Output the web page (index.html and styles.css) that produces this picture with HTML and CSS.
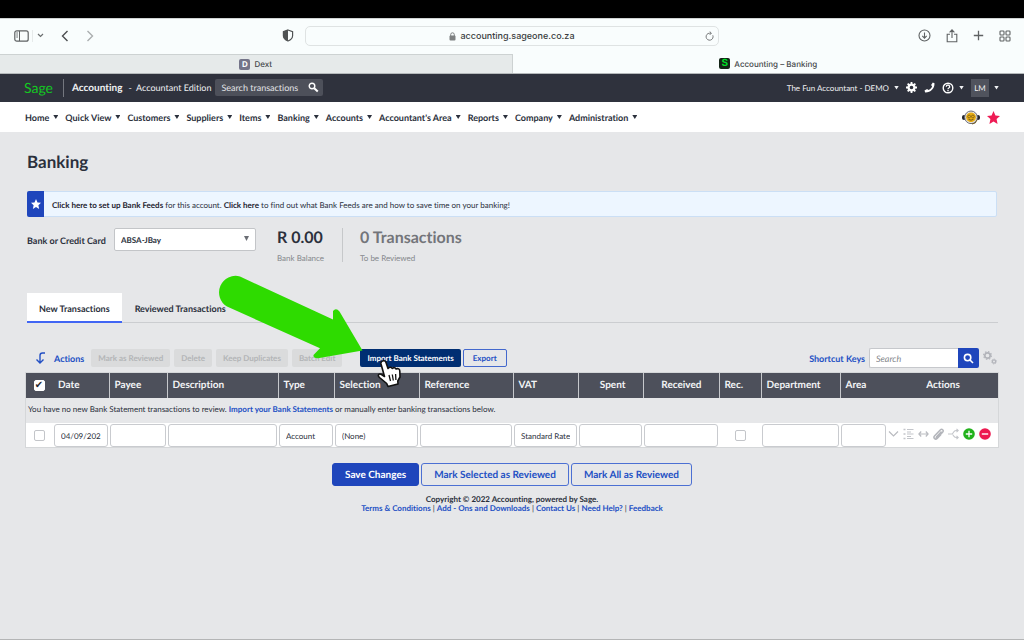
FILE: index.html
```html
<!DOCTYPE html>
<html lang="en">
<head>
<meta charset="utf-8">
<title>Accounting - Banking</title>
<link rel="stylesheet" href="styles.css">
</head>
<body>
<div class="screen-edge"></div>
<header class="browser">
  <div class="toolbar">
    <div class="tool-left">
      <button class="icon-btn" aria-label="Sidebar"><svg width="15" height="12" viewBox="0 0 15 12" fill="none" stroke="#5f6263"><rect x=".8" y=".8" width="13.4" height="10.4" rx="2" stroke-width="1.2"/><path d="M5.5 1v10M2.3 3h1.6M2.3 5h1.6M2.3 7h1.6"/></svg></button>
      <span class="tool-split"></span>
      <button class="icon-btn" aria-label="Tab groups"><svg width="7" height="5" viewBox="0 0 7 5" fill="none" stroke="#6b6e6f" stroke-width="1.2"><path d="M1 1l2.5 2.5L6 1"/></svg></button>
      <button class="icon-btn back" aria-label="Back"><svg width="8" height="12" viewBox="0 0 8 12" fill="none" stroke="#4c4e50" stroke-width="1.4"><path d="M6.5 1L1.5 6l5 5"/></svg></button>
      <button class="icon-btn forward" aria-label="Forward"><svg width="8" height="12" viewBox="0 0 8 12" fill="none" stroke="#aaaeaf" stroke-width="1.4"><path d="M1.5 1l5 5-5 5"/></svg></button>
    </div>
    <button class="icon-btn shield" aria-label="Privacy report"><svg width="12" height="13" viewBox="0 0 12 13"><path d="M6 1l4.600 1.600v4.200C10.600 9.200 8.600 11 6 12 3.400 11 1.400 9.200 1.400 6.800V2.600z" fill="none" stroke="#4f5253" stroke-width="1.200"/><path d="M6 1L1.400 2.600v4.200C1.400 9.200 3.400 11 6 12z" fill="#4f5253"/></svg></button>
    <div class="address">
      <span class="url"><svg width="7" height="9" viewBox="0 0 7 9"><rect x=".5" y="3.600" width="6" height="5" rx="1" fill="#7d8081"/><path d="M1.700 4V2.600a1.800 1.800 0 0 1 3.600 0V4" fill="none" stroke="#7d8081"/></svg>accounting.sageone.co.za</span>
      <button class="icon-btn" aria-label="Reload"><svg width="9" height="10" viewBox="0 0 9 10" fill="none" stroke="#77797a"><path d="M7.800 4.300A3.500 3.500 0 1 1 4.500 2.200h1.600M4.700.5l1.700 1.700-1.700 1.700"/></svg></button>
    </div>
    <div class="tool-right">
      <button class="icon-btn" aria-label="Downloads"><svg width="13" height="13" viewBox="0 0 13 13" fill="none" stroke="#5f6263" stroke-width="1.100"><circle cx="6.500" cy="6.500" r="5.500"/><path d="M6.500 3.500v5.500M4.300 6.900l2.200 2.200 2.200-2.200"/></svg></button>
      <button class="icon-btn" aria-label="Share"><svg width="12" height="14" viewBox="0 0 12 14" fill="none" stroke="#5f6263" stroke-width="1.100"><path d="M4 5.200H1.200v7.600h9.600V5.200H8M6 9V1M3.600 3.300L6 .9l2.400 2.400"/></svg></button>
      <button class="icon-btn" aria-label="New tab"><svg width="11" height="11" viewBox="0 0 11 11" fill="none" stroke="#5f6263" stroke-width="1.300"><path d="M5.500.8v9.400M.8 5.500h9.400"/></svg></button>
      <button class="icon-btn" aria-label="Tab overview"><svg width="12" height="12" viewBox="0 0 12 12" fill="none" stroke="#5f6263" stroke-width="1.100"><rect x="1" y="1" width="4" height="4" rx=".8"/><rect x="7" y="1" width="4" height="4" rx=".8"/><rect x="1" y="7" width="4" height="4" rx=".8"/><rect x="7" y="7" width="4" height="4" rx=".8"/></svg></button>
    </div>
  </div>
  <div class="browser-tabs">
    <button class="browser-tab idle"><span class="favicon dext">D</span>Dext</button>
    <button class="browser-tab"><span class="favicon sage">S</span>Accounting – Banking</button>
  </div>
</header>

<div class="app-bar">
  <a class="logo" href="#">Sage</a>
  <span class="app-split"></span>
  <strong class="product">Accounting</strong>
  <span class="edition">- &nbsp;Accountant Edition</span>
  <form class="top-search">
    <input type="text" placeholder="Search transactions" aria-label="Search transactions">
    <button type="button" aria-label="Search"><svg width="11" height="11" viewBox="0 0 11 11" fill="none" stroke="#fff"><circle cx="4" cy="4" r="2.800" stroke-width="1.400"/><path d="M6.200 6.200l3.600 3.300" stroke-width="2"/></svg></button>
  </form>
  <div class="account">
    <button class="menu-btn company">The Fun Accountant - DEMO<span class="caret"></span></button>
    <button class="menu-btn" aria-label="Settings"><svg width="11" height="11" viewBox="0 0 12 12"><circle cx="6" cy="6" r="3.200" fill="none" stroke="#fff" stroke-width="2.400"/><path d="M6 0v2.500M6 9.500V12M0 6h2.500M9.500 6H12M1.800 1.800l1.700 1.700M8.500 8.500l1.700 1.700M10.200 1.800L8.500 3.500M3.500 8.500l-1.700 1.700" stroke="#fff" stroke-width="2"/></svg></button>
    <button class="menu-btn" aria-label="Phone"><svg width="11" height="11" viewBox="0 0 11 11"><path d="M8.800.5l1.700.7C10.700 6.500 6.500 10.700 1.200 10.500L.5 8.400l2.600-1.300 1.300 1C6 7.300 7.300 6 8.100 4.400l-1-1.300z" fill="#fff"/></svg></button>
    <button class="menu-btn" aria-label="Help"><svg width="12" height="12" viewBox="0 0 12 12" fill="none" stroke="#fff" stroke-width="1.400"><circle cx="6" cy="6" r="4.800"/><path d="M4.300 4.800a1.700 1.500 0 1 1 2.500 1.200C6.200 6.300 6 6.500 6 7.200M6 8v1.300" stroke-width="1.300"/></svg><span class="caret"></span></button>
    <button class="menu-btn"><span class="avatar">LM</span><span class="caret"></span></button>
  </div>
</div>

<nav class="main-nav">
  <a href="#">Home<span class="caret"></span></a>
  <a href="#">Quick View<span class="caret"></span></a>
  <a href="#">Customers<span class="caret"></span></a>
  <a href="#">Suppliers<span class="caret"></span></a>
  <a href="#">Items<span class="caret"></span></a>
  <a href="#">Banking<span class="caret"></span></a>
  <a href="#">Accounts<span class="caret"></span></a>
  <a href="#">Accountant's Area<span class="caret"></span></a>
  <a href="#">Reports<span class="caret"></span></a>
  <a href="#">Company<span class="caret"></span></a>
  <a href="#">Administration<span class="caret"></span></a>
  <div class="nav-icons">
    <button class="icon-btn" aria-label="Support"><svg width="18" height="15" viewBox="0 0 18 15"><rect x="0" y="5" width="4" height="5" rx="2" fill="#24262e"/><rect x="14" y="5" width="4" height="5" rx="2" fill="#24262e"/><circle cx="9" cy="7.300" r="6.300" fill="#e7e7ea" stroke="#6c6d74"/><circle cx="9" cy="7.300" r="4.900" fill="#e8ad13"/><circle cx="7.100" cy="6.500" r="1.400" fill="none" stroke="#7a5c14" stroke-width=".8"/><circle cx="10.900" cy="6.500" r="1.400" fill="none" stroke="#7a5c14" stroke-width=".8"/><path d="M6.500 9.300q2.500 1.700 5 0M15 10q-1 4-5 4" fill="none" stroke="#6b531b" stroke-width=".9"/></svg></button>
    <button class="icon-btn" aria-label="Favourites"><svg width="13" height="13" viewBox="0 0 24 24"><path d="M12 0l3.600 8.200 8.400.8-6.300 5.800L19.500 24 12 19.200 4.500 24l1.800-9.200L0 9l8.400-.8z" fill="#ee1c55"/></svg></button>
  </div>
</nav>

<main class="page">
  <h1>Banking</h1>

  <div class="notice">
    <span class="notice-mark"><svg width="10" height="10" viewBox="0 0 24 24"><path d="M12 0l3.600 8.200 8.400.8-6.300 5.800L19.500 24 12 19.200 4.500 24l1.800-9.200L0 9l8.400-.8z" fill="#fff"/></svg></span>
    <p><a href="#">Click here to set up Bank Feeds</a> for this account. <a href="#">Click here</a> to find out what Bank Feeds are and how to save time on your banking!</p>
  </div>

  <section class="summary">
    <label for="bank">Bank or Credit Card</label>
    <div class="bank-select">
      <select id="bank"><option>ABSA-JBay</option></select>
      <span class="caret tall"></span>
    </div>
    <div class="stat"><strong>R 0.00</strong><span>Bank Balance</span></div>
    <div class="stat muted"><strong>0 Transactions</strong><span>To be Reviewed</span></div>
  </section>

  <div class="tabs">
    <button class="tab active">New Transactions</button>
    <button class="tab">Reviewed Transactions</button>
  </div>

  <div class="actions">
    <span class="actions-title"><svg width="11" height="12" viewBox="0 0 11 12" fill="none" stroke="#2350c4" stroke-width="1.400"><path d="M10 1H7.500Q5 1 5 3.500V10.500M1.500 7.500L5 11l3.500-3.500"/></svg>Actions</span>
    <button class="btn" disabled>Mark as Reviewed</button>
    <button class="btn" disabled>Delete</button>
    <button class="btn" disabled>Keep Duplicates</button>
    <button class="btn" disabled>Batch Edit</button>
    <button class="btn import">Import Bank Statements
      <svg class="arrow" width="148" height="88" viewBox="216 273 148 88" aria-hidden="true"><path d="M240 276.500L333 319.500V311Q336 307.500 339.500 311.500L362.500 350.500 318 358.300Q313 358.500 313.500 355L320 348.300 227 306.500A16.500 16.500 0 0 1 240 276.500z" fill="#2edb00"/></svg>
      <svg class="hand" width="25" height="29" viewBox="0 0 25 29" aria-hidden="true"><path d="M5.500 2C7 1.200 8.500 2 9 3.500L11 9.500C12.500 7.500 14.500 8 15.200 9.500 16.800 8 18.400 8.600 19 10 21 9 22.700 10 22.800 12L23 18 20.800 22 21 25 11 27.500 9.700 24.500 2.500 18.500C0 16 2.200 14.200 4.500 15.500L7.500 17.500 4 5Q3.600 2.700 5.500 2z" fill="#fff" stroke="#111" stroke-width="1.600" stroke-linejoin="round"/><path d="M12 16l1.500 6M15.300 15.500l1 6M18.600 15l.3 6" stroke="#111" stroke-width="1.300"/></svg>
    </button>
    <button class="btn export">Export</button>
    <div class="table-tools">
      <a href="#">Shortcut Keys</a>
      <form class="table-search">
        <input type="text" placeholder="Search" aria-label="Search">
        <button type="button" aria-label="Search"><svg width="11" height="11" viewBox="0 0 11 11" fill="none" stroke="#fff" stroke-width="1.600"><circle cx="4.600" cy="4.600" r="3.200"/><path d="M7 7l3 3"/></svg></button>
      </form>
      <button class="icon-btn gears" aria-label="Options"><svg width="14" height="14" viewBox="0 0 14 14" fill="none" stroke="#b2b4ba"><circle cx="4.500" cy="4.500" r="2.700" stroke-width="1.700"/><circle cx="4.500" cy="4.500" r="3.900" stroke-width="1.200" stroke-dasharray="1.530 1.530"/><circle cx="11" cy="10.500" r="1.600" stroke-width="1.200"/><circle cx="11" cy="10.500" r="2.500" stroke-width=".8" stroke-dasharray=".98 .98"/></svg></button>
    </div>
  </div>

  <table class="grid">
    <colgroup><col class="c-check"><col class="c-date"><col class="c-payee"><col class="c-desc"><col class="c-type"><col class="c-sel"><col class="c-ref"><col class="c-vat"><col class="c-spent"><col class="c-recv"><col class="c-rec"><col class="c-dept"><col class="c-area"><col class="c-act"></colgroup>
    <thead><tr>
      <th><input type="checkbox" checked aria-label="Select all"></th><th class="plain">Date</th><th>Payee</th><th>Description</th><th>Type</th><th>Selection</th><th>Reference</th><th>VAT</th><th class="right">Spent</th><th class="right">Received</th><th>Rec.</th><th>Department</th><th>Area</th><th class="plain center">Actions</th>
    </tr></thead>
    <tbody>
      <tr class="message"><td colspan="14">You have no new Bank Statement transactions to review. <a href="#">Import your Bank Statements</a> or manually enter banking transactions below.</td></tr>
      <tr class="entry">
        <td class="center"><input type="checkbox" aria-label="Select row"></td>
        <td><input type="text" value="04/09/202" aria-label="Date"></td>
        <td><input type="text" aria-label="Payee"></td>
        <td><input type="text" aria-label="Description"></td>
        <td><input type="text" value="Account" aria-label="Type"></td>
        <td><input type="text" value="(None)" aria-label="Selection"></td>
        <td><input type="text" aria-label="Reference"></td>
        <td><input type="text" value="Standard Rate" aria-label="VAT"></td>
        <td><input type="text" aria-label="Spent"></td>
        <td><input type="text" aria-label="Received"></td>
        <td class="center"><input type="checkbox" aria-label="Reconciled"></td>
        <td><input type="text" aria-label="Department"></td>
        <td><input type="text" aria-label="Area"></td>
        <td><div class="row-icons">
          <button class="icon-btn" aria-label="Expand"><svg width="11" height="12" viewBox="0 0 11 12" fill="none" stroke="#b9bbc0" stroke-width="1.200"><path d="M1 3.500l4.500 4.500L10 3.500"/></svg></button>
          <button class="icon-btn" aria-label="Details"><svg width="11" height="12" viewBox="0 0 11 12" fill="none" stroke="#c3c5ca"><path d="M.5 1.500h2M.5 6h2M.5 10.500h2" stroke-width="1.600"/><path d="M4 1.500h6.500M4 4h4M4 6h6.500M4 8.500h4M4 10.500h6.500"/></svg></button>
          <button class="icon-btn" aria-label="Transfer"><svg width="11" height="12" viewBox="0 0 11 12" fill="none" stroke="#b9bbc0" stroke-width="1.200"><path d="M1 6h9M3.200 3.500L.9 6l2.300 2.500M7.800 3.500L10.100 6 7.800 8.500"/></svg></button>
          <button class="icon-btn" aria-label="Attach"><svg width="11" height="12" viewBox="0 0 11 12" fill="none" stroke="#b3b5bb" stroke-width="1.500"><path d="M8.500 3.500L3.600 8.800c-.8.900 0 1.600.8.900l5.200-5.500C11.200 2.300 9 .3 7.200 2L1.700 7.700c-2 2.200.6 4.500 2.500 2.700L8 6.500"/></svg></button>
          <button class="icon-btn" aria-label="Split"><svg width="11" height="12" viewBox="0 0 11 12" fill="none" stroke="#c3c5ca" stroke-width="1.100"><path d="M0 6h4M10 2.500H8Q6.500 2.500 5.500 4.300T4 6q.5 0 1.500 1.700T8 9.500h2M8.500.8l1.700 1.700-1.700 1.700M8.500 7.800l1.700 1.700-1.700 1.700"/></svg></button>
          <button class="icon-btn" aria-label="Add line"><svg width="12" height="12" viewBox="0 0 12 12"><circle cx="6" cy="6" r="5.800" fill="#22b21c"/><path d="M6 2.800v6.400M2.800 6h6.400" stroke="#fff" stroke-width="1.300"/></svg></button>
          <button class="icon-btn" aria-label="Remove line"><svg width="12" height="12" viewBox="0 0 12 12"><circle cx="6" cy="6" r="5.800" fill="#ed184f"/><path d="M2.800 6h6.400" stroke="#fff" stroke-width="1.400"/></svg></button>
        </div></td>
      </tr>
    </tbody>
  </table>

  <div class="submit">
    <button class="big primary">Save Changes</button>
    <button class="big">Mark Selected as Reviewed</button>
    <button class="big">Mark All as Reviewed</button>
  </div>

  <footer class="footer">
    <p class="copy">Copyright © 2022 Accounting, powered by Sage.</p>
    <p><a href="#">Terms &amp; Conditions</a> | <a href="#">Add - Ons and Downloads</a> | <a href="#">Contact Us</a> | <a href="#">Need Help?</a> | <a href="#">Feedback</a></p>
  </footer>
</main>
</body>
</html>
```
FILE: styles.css
```css
* { box-sizing: border-box; }
body {
  display: flex;
  flex-direction: column;
  margin: 0;
  min-height: 100vh;
  background: #e6e7e9;
  border-bottom: 1px solid #b4b5b6;
  color: #2b303c;
  font-family: Lato, "Open Sans", sans-serif;
  font-size: 9px;
  font-variant-ligatures: none;
  text-rendering: geometricPrecision;
}
button, input, select { font: inherit; font-variant-ligatures: none; text-rendering: inherit; color: inherit; margin: 0; }
button { border: 0; background: none; padding: 0; }
h1, p { margin: 0; }
svg { display: block; flex: none; }
a { color: #2350c4; text-decoration: none; }
.icon-btn { display: flex; align-items: center; }
.caret {
  flex: none;
  width: 5px;
  height: 4px;
  background: currentColor;
  clip-path: polygon(0 0, 100% 0, 50% 100%);
}

/* Browser */
.screen-edge { height: 18px; background: #000; }
.browser { font-family: Inter, sans-serif; color: #45484a; background: #f9fdfd; border-top: 1px solid #cfd3d3; }
.toolbar { display: grid; grid-template-columns: 282px 23px minmax(200px, 414px) 1fr; align-items: center; height: 35px; padding-bottom: 2px; }
.tool-left { display: flex; align-items: center; padding-left: 14px; }
.tool-split { width: 1px; height: 12px; margin: 0 4px 0 3px; background: #e6eaea; }
.back { margin-left: 17px; }
.forward { margin-left: 17px; }
.address { display: flex; align-items: center; height: 20px; padding: 0 4px; border: 1px solid #dfe3e3; border-radius: 5px; }
.url { display: flex; flex: 1; justify-content: center; align-items: center; gap: 4px; padding: 1px 0 0 9px; font-size: 9px; font-weight: 500; color: #3b3d3f; }
.tool-right { display: flex; justify-content: flex-end; align-items: center; gap: 15px; padding-right: 13px; }
.browser-tabs { display: flex; height: 20px; border-bottom: 1px solid #b5b9bb; }
.browser-tab { display: flex; flex: 1 1 0; align-items: center; justify-content: center; gap: 4px; font-size: 8px; font-weight: 500; }
.idle { background: #e6eaea; border-top: 1px solid #cdd2d2; border-right: 1px solid #cdd2d2; }
.favicon { width: 11px; height: 11px; border-radius: 2px; font-size: 8px; font-weight: 700; line-height: 11px; text-align: center; }
.dext { background: #747489; color: #fff; }
.sage { background: #142416; color: #00dc26; font-size: 10px; }

/* Application bar */
.app-bar { display: flex; align-items: center; height: 28px; padding: 0 25px 1px 24px; background: #2f323d; color: #f0f1f3; }
.logo { width: 32px; margin-right: 7px; color: #14c822; font-size: 14px; line-height: 20px; }
.app-split { width: 1px; height: 18px; margin-right: 8px; background: #74777f; }
.product { font-size: 10px; }
.edition { margin-left: 6px; }
.top-search { display: flex; height: 17px; margin-left: 4px; background: #4d505a; border-radius: 2px; }
.top-search input { width: 89px; padding: 0 0 0 6px; border: 0; background: none; }
.top-search input::placeholder { color: #e2e3e6; opacity: 1; }
.top-search button { padding: 0 4px; }
.account { display: flex; align-items: center; gap: 7px; margin-left: auto; }
.menu-btn { display: flex; align-items: center; gap: 5px; }
.company { font-size: 8px; }
.avatar { width: 18px; background: #50535d; font-size: 8px; line-height: 18px; text-align: center; }

/* Main navigation */
.main-nav { display: flex; align-items: center; gap: 7px; height: 30px; padding: 0 24px 0 25px; background: #fff; }
.main-nav a { display: flex; align-items: center; gap: 4px; color: #2b303c; font-weight: 700; white-space: nowrap; }
.nav-icons { display: flex; align-items: center; gap: 7px; margin-left: auto; }

/* Page */
.page { padding: 20px 25px 0; }
h1 { margin-left: 2px; font-size: 17px; line-height: 20px; }
.notice { display: flex; height: 26px; margin: 19px 2px 0; background: #edf6ff; border: 1px solid #cbdff5; border-radius: 2px; }
.notice-mark { display: flex; align-items: center; justify-content: center; width: 17px; margin: -1px 0 -1px -1px; background: #1f46bc; border-radius: 2px 0 0 2px; }
.notice p { padding-left: 8px; font-size: 8px; line-height: 27px; }
.notice a { color: #1f2430; font-weight: 700; }
.summary { display: flex; margin: 11px 2px 0; height: 34px; }
.summary label { min-width: 82px; font-weight: 700; line-height: 26px; }
.bank-select { position: relative; width: 142px; height: 23px; margin-left: 5px; }
.bank-select select { width: 100%; height: 100%; padding: 0 6px; appearance: none; background: #fff; border: 1px solid #c3c5c8; border-radius: 2px; font-size: 8px; font-weight: 700; }
.bank-select .caret { position: absolute; right: 7px; top: 8px; }
.tall { height: 5px; color: #6a6d74; }
.stat { display: flex; flex-direction: column; gap: 6px; margin-left: 21px; padding-top: 1px; }
.stat strong { font-size: 16px; line-height: 18px; }
.stat span { color: #85878c; font-size: 8px; line-height: 10px; }
.stat.muted { padding-left: 17px; margin-left: 18px; border-left: 1px solid #c6c8ca; }
.muted strong { color: #73757a; }
.tabs { display: flex; margin: 31px 1px 0 2px; height: 30px; border-bottom: 1px solid #cbcdd0; }
.tab { height: 30px; padding: 2px 13px 0; border-bottom: 2px solid transparent; font-weight: 700; }
.tab.active { padding: 2px 12px 0; background: #fff; border-color: #4166f4; }

/* Actions */
.actions { display: flex; align-items: center; gap: 4px; height: 20px; margin: 25px 2px 0 10px; }
.actions-title { display: flex; align-items: center; gap: 8px; margin-right: 3px; color: #2350c4; font-weight: 700; }
.btn { height: 18px; padding: 0 7px; border-radius: 2px; font-size: 8px; font-weight: 700; white-space: nowrap; }
.btn:disabled { background: #dadbdc; color: #b3b5b7; }
.import { position: relative; margin-left: 14px; background: #002e72; color: #fff; }
.export { margin-left: -2px; padding: 0 9px; border: 1px solid #4368cd; color: #2350c4; }
.arrow { position: absolute; right: 97px; bottom: 6px; }
.hand { position: absolute; left: 17px; top: 10px; }
.table-tools { display: flex; align-items: center; gap: 4px; margin-left: auto; }
.table-tools a { font-weight: 700; }
.table-search { display: flex; height: 20px; }
.table-search input { width: 89px; padding: 0 6px; border: 1px solid #c6c8cc; border-right: 0; border-radius: 2px 0 0 2px; }
.table-search input::placeholder { color: #85878c; font-style: italic; opacity: 1; }
.table-search button { padding: 0 5px; background: #1f46bc; border-radius: 0 2px 2px 0; }

/* Transaction grid */
.grid { width: 100%; margin-top: 4px; table-layout: fixed; border-collapse: collapse; outline: 1px solid #d5d7d9; outline-offset: -1px; }
.c-check { width: 28px; }
.c-date { width: 56px; }
.c-payee { width: 58px; }
.c-desc { width: 111px; }
.c-type { width: 56px; }
.c-sel { width: 85px; }
.c-ref { width: 94px; }
.c-vat { width: 65px; }
.c-spent { width: 65px; }
.c-recv { width: 76px; }
.c-rec { width: 42px; }
.c-dept { width: 79px; }
.c-area { width: 47px; }
.c-act { width: 112px; }
.grid th { height: 26px; padding: 0 5px; background: #4d505b; border-left: 1px solid #c6c8cc; color: #f3f4f6; font-size: 10px; text-align: left; }
.grid th:first-child { padding: 0; border-left: 0; }
.grid th.plain { border-left: 0; }
.grid th.right { padding-right: 17px; text-align: right; }
.grid .center { text-align: center; }
.message td { height: 25px; padding: 0 3px 3px; font-size: 8px; }
.message a { font-weight: 700; }
.entry { background: #fff; }
.entry td { height: 25px; padding: 0 1px; }
.entry input[type="text"] { display: block; width: 100%; height: 23px; padding: 0 6px; border: 1px solid #c9cbcf; border-radius: 3px; background: #fff; font-size: 8px; }
input[type="checkbox"] { display: block; width: 11px; height: 11px; margin: 0 auto; appearance: none; border: 1px solid #c3c5c9; border-radius: 2px; background: #fff; }
input[type="checkbox"]:checked { border-color: #fff; background: #fff; }
input[type="checkbox"]:checked::before { content: "✔"; display: block; color: #25272c; font-family: "DejaVu Sans", sans-serif; font-size: 10px; line-height: 9px; text-align: center; }
.row-icons { display: flex; align-items: center; gap: 4px; padding-bottom: 3px; }

/* Submit and footer */
.submit { display: flex; justify-content: center; gap: 2px; margin-top: 15px; }
.big { height: 23px; padding: 0 12px; border: 1px solid #4c70d3; border-radius: 3px; color: #2350c4; font-size: 10px; font-weight: 700; }
.primary { background: #1f46bc; border-color: #1f46bc; color: #fff; }
.footer { margin-top: 9px; font-size: 8px; line-height: 9px; text-align: center; }
.copy, .footer a { font-weight: 700; }
```
